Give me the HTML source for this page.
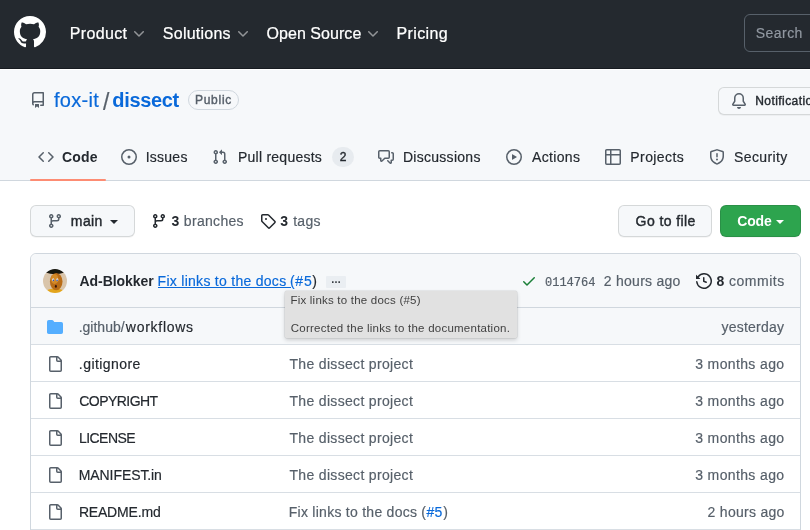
<!DOCTYPE html>
<html lang="en">
<head>
<meta charset="utf-8">
<title>fox-it/dissect</title>
<style>

*{box-sizing:border-box;margin:0;padding:0}
html,body{width:810px;height:530px;overflow:hidden;background:#fff}
body{font-family:"Liberation Sans",Arial,sans-serif;font-size:14px;color:#24292f;position:relative;-webkit-font-smoothing:antialiased}
a{color:inherit;text-decoration:none}
.abs{position:absolute;white-space:nowrap}
svg{display:block}
.t{position:absolute;white-space:nowrap;line-height:20px;height:20px}
/* header */
#hdr{position:absolute;left:0;top:0;width:810px;height:69px;background:#24292f;border-bottom:1px solid #171b21}
.nav{color:#fff;font-size:16px;top:24px;-webkit-text-stroke:.2px #fff}
.chev{position:absolute;top:25.2px}
#search{position:absolute;left:744px;top:14px;width:90px;height:38px;border:1px solid #57606a;border-radius:6px}
/* repo head */
#rh{position:absolute;left:0;top:70px;width:810px;height:111px;background:#f6f8fa;border-bottom:1px solid #d0d7de}
.tab{font-size:14px;top:147px;color:#24292f}
.ico{position:absolute}
.btn{position:absolute;border:1px solid rgba(27,31,36,.15);border-radius:6px;background:#f6f8fa;box-shadow:0 1px 0 rgba(27,31,36,.04)}
/* file box */
#box{position:absolute;left:30px;top:253px;width:771px;height:300px;border:1px solid #d0d7de;border-radius:6px;background:#fff}
#boxh{position:absolute;left:0;top:0;width:769px;height:54px;background:#f6f8fa;border-bottom:1px solid #d0d7de;border-radius:6px 6px 0 0}
.row{position:absolute;left:31px;width:769px;height:37px;border-top:1px solid #d8dee4}
.fn{left:79px;color:#24292f}
.msg{left:289px;color:#57606a}
.age{right:26px;color:#57606a;text-align:right}
.t,.abs{-webkit-text-stroke:.18px currentColor}
[style*="font-weight:bold"]{-webkit-text-stroke:0 currentColor}
.med.med{font-weight:normal;-webkit-text-stroke:.4px currentColor}
.nav.nav{-webkit-text-stroke:.22px #fff}
#tp1,#tp2{-webkit-text-stroke:0 currentColor}
/*TUNE*/
#n1{left:69.74px!important;right:auto!important;letter-spacing:0.341px}
#n2{left:162.84px!important;right:auto!important;letter-spacing:0.246px}
#n3{left:266.53px!important;right:auto!important;letter-spacing:0.050px}
#n4{left:396.53px!important;right:auto!important;letter-spacing:0.376px}
#srch{left:755.79px!important;right:auto!important;letter-spacing:0.448px}
#own{left:54.00px!important;right:auto!important;letter-spacing:0.301px}
#sl{left:102.97px!important;right:auto!important;letter-spacing:0.000px}
#rep{left:112.35px!important;right:auto!important;letter-spacing:-0.334px}
#t1{left:62.00px!important;right:auto!important;letter-spacing:0.182px}
#t2{left:145.64px!important;right:auto!important;letter-spacing:0.262px}
#t3{left:238.01px!important;right:auto!important;letter-spacing:0.241px}
#t4{left:402.92px!important;right:auto!important;letter-spacing:0.283px}
#t5{left:531.94px!important;right:auto!important;letter-spacing:0.351px}
#t6{left:630.29px!important;right:auto!important;letter-spacing:0.424px}
#t7{left:734.02px!important;right:auto!important;letter-spacing:0.396px}
#main{left:70.86px!important;right:auto!important;letter-spacing:0.394px}
#br3{left:171.62px!important;right:auto!important;letter-spacing:0.000px}
#brt{left:183.85px!important;right:auto!important;letter-spacing:0.306px}
#tg3{left:280.16px!important;right:auto!important;letter-spacing:0.000px}
#tgt{left:293.18px!important;right:auto!important;letter-spacing:0.311px}
#gtf{left:635.60px!important;right:auto!important;letter-spacing:0.419px}
#cb{left:737.30px!important;right:auto!important;letter-spacing:-0.179px}
#au{left:79.51px!important;right:auto!important;letter-spacing:-0.054px}
#cm{left:157.58px!important;right:auto!important;letter-spacing:0.281px}
#cmp{left:290.07px!important;right:auto!important;letter-spacing:0.000px}
#cm2{left:295.35px!important;right:auto!important;letter-spacing:0.914px}
#cm3{left:312.16px!important;right:auto!important;letter-spacing:0.000px}
#cago{left:603.84px!important;right:auto!important;letter-spacing:0.260px}
#cmt{left:728.99px!important;right:auto!important;letter-spacing:0.533px}
#f0a{left:78.68px!important;right:auto!important;letter-spacing:0.000px}
#f0b{left:125.83px!important;right:auto!important;letter-spacing:0.721px}
#a0{left:721.47px!important;right:auto!important;letter-spacing:0.220px}
#f1{left:78.85px!important;right:auto!important;letter-spacing:0.439px}
#f2{left:79.30px!important;right:auto!important;letter-spacing:-0.555px}
#f3{left:78.89px!important;right:auto!important;letter-spacing:-0.519px}
#f4{left:78.78px!important;right:auto!important;letter-spacing:-0.087px}
#f5{left:78.88px!important;right:auto!important;letter-spacing:-0.179px}
#m1{left:289.48px!important;right:auto!important;letter-spacing:0.326px}
#m2{left:289.48px!important;right:auto!important;letter-spacing:0.326px}
#m3{left:289.48px!important;right:auto!important;letter-spacing:0.326px}
#m4{left:289.48px!important;right:auto!important;letter-spacing:0.326px}
#a1{left:695.20px!important;right:auto!important;letter-spacing:0.370px}
#a2{left:695.20px!important;right:auto!important;letter-spacing:0.370px}
#a3{left:695.20px!important;right:auto!important;letter-spacing:0.370px}
#a4{left:695.20px!important;right:auto!important;letter-spacing:0.370px}
#tp1{left:290.47px!important;right:auto!important;letter-spacing:0.215px}
#tp2{left:290.81px!important;right:auto!important;letter-spacing:0.235px}
#pubt{left:196.95px!important;right:auto!important;letter-spacing:0.752px}
#m5{left:288.74px!important;right:auto!important;letter-spacing:0.265px}
#m5p{left:421.16px!important;right:auto!important;letter-spacing:0.000px}
#m5b{left:426.39px!important;right:auto!important;letter-spacing:0.385px}
#m5c{left:443.26px!important;right:auto!important;letter-spacing:0.000px}
#a5{left:707.61px!important;right:auto!important;letter-spacing:0.281px}
#c8{left:716.47px!important;right:auto!important;letter-spacing:0.000px}
/*ENDTUNE*/
</style>
</head>
<body>
<div id="pg" style="position:absolute;left:0;top:0;width:810px;height:530px;will-change:transform">
<div id="hdr">
  <svg class="ico" style="left:14px;top:16px" width="32" height="32" viewBox="0 0 16 16" fill="#fff"><path fill-rule="evenodd" d="M8 0C3.58 0 0 3.58 0 8c0 3.54 2.29 6.53 5.47 7.59.4.07.55-.17.55-.38 0-.19-.01-.82-.01-1.49-2.01.37-2.53-.49-2.69-.94-.09-.23-.48-.94-.82-1.13-.28-.15-.68-.52-.01-.53.63-.01 1.08.58 1.23.82.72 1.21 1.87.87 2.33.66.07-.52.28-.87.51-1.07-1.78-.2-3.64-.89-3.64-3.95 0-.87.31-1.59.82-2.15-.08-.2-.36-1.02.08-2.12 0 0 .67-.21 2.2.82.64-.18 1.32-.27 2-.27.68 0 1.36.09 2 .27 1.53-1.04 2.2-.82 2.2-.82.44 1.1.16 1.92.08 2.12.51.56.82 1.27.82 2.15 0 3.07-1.87 3.75-3.65 3.95.29.25.54.73.54 1.48 0 1.07-.01 1.93-.01 2.2 0 .21.15.46.55.38A8.013 8.013 0 0016 8c0-4.42-3.58-8-8-8z"/></svg>
  <span class="t nav" id="n1" style="left:70px">Product</span>
  <svg class="chev" style="left:131px" width="16" height="16" viewBox="0 0 16 16" fill="#fff" opacity=".5"><path d="M12.78 6.22a.75.75 0 010 1.06l-4.25 4.25a.75.75 0 01-1.06 0L3.22 7.28a.75.75 0 011.06-1.06L8 9.94l3.72-3.72a.75.75 0 011.06 0z"/></svg>
  <span class="t nav" id="n2" style="left:163px">Solutions</span>
  <svg class="chev" style="left:235px" width="16" height="16" viewBox="0 0 16 16" fill="#fff" opacity=".5"><path d="M12.78 6.22a.75.75 0 010 1.06l-4.25 4.25a.75.75 0 01-1.06 0L3.22 7.28a.75.75 0 011.06-1.06L8 9.94l3.72-3.72a.75.75 0 011.06 0z"/></svg>
  <span class="t nav" id="n3" style="left:267px">Open Source</span>
  <svg class="chev" style="left:365px" width="16" height="16" viewBox="0 0 16 16" fill="#fff" opacity=".5"><path d="M12.78 6.22a.75.75 0 010 1.06l-4.25 4.25a.75.75 0 01-1.06 0L3.22 7.28a.75.75 0 011.06-1.06L8 9.94l3.72-3.72a.75.75 0 011.06 0z"/></svg>
  <span class="t nav" id="n4" style="left:397px">Pricing</span>
  <div id="search"></div>
  <span class="t" id="srch" style="left:757px;top:23px;font-size:14px;color:#9198a1">Search</span>
</div>

<div id="rh"></div>
<svg class="ico" style="left:30px;top:92px" width="16" height="16" viewBox="0 0 16 16" fill="#57606a"><path fill-rule="evenodd" d="M2 2.5A2.5 2.5 0 014.5 0h8.75a.75.75 0 01.75.75v12.5a.75.75 0 01-.75.75h-2.5a.75.75 0 110-1.5h1.75v-2h-8a1 1 0 00-.714 1.7.75.75 0 01-1.072 1.05A2.495 2.495 0 012 11.5v-9zm10.5-1V9h-8c-.356 0-.694.074-1 .208V2.5a1 1 0 011-1h8zM5 12.25v3.25a.25.25 0 00.4.2l1.45-1.087a.25.25 0 01.3 0L8.6 15.7a.25.25 0 00.4-.2v-3.25a.25.25 0 00-.25-.25h-3.5a.25.25 0 00-.25.25z"/></svg>
<span class="t" id="own" style="left:54px;top:88px;font-size:20px;line-height:24px;height:24px;color:#0969da">fox-it</span>
<span class="t" id="sl" style="left:103px;top:90px;font-size:23px;line-height:24px;height:24px;color:#57606a">/</span>
<span class="t" id="rep" style="left:113px;top:88px;font-size:20px;line-height:24px;height:24px;color:#0969da;font-weight:bold">dissect</span>
<span class="abs med" id="pub" style="left:188px;top:90px;width:51px;height:20px;border:1px solid #d0d7de;border-radius:10px;font-size:12px;line-height:18px;color:#57606a;text-align:center"><span id="pubt">Public</span></span>
<div class="btn" style="left:718px;top:87px;width:110px;height:28px"></div>
<svg class="ico" style="left:731px;top:93px" width="16" height="16" viewBox="0 0 16 16" fill="#57606a"><path d="M8 16a2 2 0 001.985-1.75c.017-.137-.097-.25-.235-.25h-3.5c-.138 0-.252.113-.235.25A2 2 0 008 16z"/><path fill-rule="evenodd" d="M8 1.5A3.5 3.5 0 004.5 5v2.947c0 .346-.102.683-.294.97l-1.703 2.556a.018.018 0 00-.003.01l.001.006c0 .002.002.004.004.006a.017.017 0 00.006.004l.007.001h10.964l.007-.001a.016.016 0 00.006-.004.016.016 0 00.004-.006l.001-.007a.017.017 0 00-.003-.01l-1.703-2.554a1.75 1.75 0 01-.294-.97V5A3.5 3.5 0 008 1.5zM3 5a5 5 0 0110 0v2.947c0 .05.015.098.042.139l1.703 2.555A1.518 1.518 0 0113.482 13H2.518a1.518 1.518 0 01-1.263-2.36l1.703-2.554A.25.25 0 003 7.947V5z"/></svg>
<span class="t med" id="notif" style="left:755.2px;top:91px;font-size:12px;color:#24292f;letter-spacing:.44px">Notifications</span>

<!-- tabs -->
<svg class="ico" style="left:38px;top:149px" width="16" height="16" viewBox="0 0 16 16" fill="#57606a"><path fill-rule="evenodd" d="M4.72 3.22a.75.75 0 011.06 1.06L2.06 8l3.72 3.72a.75.75 0 11-1.06 1.06L.47 8.53a.75.75 0 010-1.06l4.25-4.25zm6.56 0a.75.75 0 10-1.06 1.06L13.94 8l-3.72 3.72a.75.75 0 101.06 1.06l4.25-4.25a.75.75 0 000-1.06l-4.25-4.25z"/></svg>
<span class="t tab" id="t1" style="left:62px;font-weight:bold">Code</span>
<div class="abs" style="left:30px;top:179px;width:76px;height:2px;background:#fd8c73;border-radius:6px;z-index:2"></div>
<svg class="ico" style="left:121px;top:149px" width="16" height="16" viewBox="0 0 16 16" fill="#57606a"><path d="M8 9.5a1.5 1.5 0 100-3 1.5 1.5 0 000 3z"/><path fill-rule="evenodd" d="M8 0a8 8 0 100 16A8 8 0 008 0zM1.5 8a6.5 6.5 0 1113 0 6.5 6.5 0 01-13 0z"/></svg>
<span class="t tab" id="t2" style="left:146px">Issues</span>
<svg class="ico" style="left:212px;top:149px" width="16" height="16" viewBox="0 0 16 16" fill="#57606a"><path fill-rule="evenodd" d="M7.177 3.073L9.573.677A.25.25 0 0110 .854v4.792a.25.25 0 01-.427.177L7.177 3.427a.25.25 0 010-.354zM3.75 2.5a.75.75 0 100 1.5.75.75 0 000-1.5zm-2.25.75a2.25 2.25 0 113 2.122v5.256a2.251 2.251 0 11-1.5 0V5.372A2.25 2.25 0 011.5 3.25zM11 2.5h-1V4h1a1 1 0 011 1v5.628a2.251 2.251 0 101.5 0V5A2.5 2.5 0 0011 2.5zm1 10.25a.75.75 0 111.5 0 .75.75 0 01-1.5 0zM3.75 12a.75.75 0 100 1.5.75.75 0 000-1.5z"/></svg>
<span class="t tab" id="t3" style="left:238px">Pull requests</span>
<span class="abs med" id="cnt" style="left:332px;top:147px;width:22px;height:20px;border-radius:10px;background:rgba(175,184,193,.2);font-size:12px;line-height:20px;text-align:center;color:#24292f">2</span>
<svg class="ico" style="left:378px;top:149px" width="16" height="16" viewBox="0 0 16 16" fill="#57606a"><path fill-rule="evenodd" d="M1.5 2.75a.25.25 0 01.25-.25h8.5a.25.25 0 01.25.25v5.5a.25.25 0 01-.25.25h-3.5a.75.75 0 00-.53.22L3.5 11.44V9.25a.75.75 0 00-.75-.75h-1a.25.25 0 01-.25-.25v-5.5zM1.75 1A1.75 1.75 0 000 2.75v5.5C0 9.216.784 10 1.75 10H2v1.543a1.457 1.457 0 002.487 1.03L7.061 10h3.189A1.75 1.75 0 0012 8.25v-5.5A1.75 1.75 0 0010.25 1h-8.5zM14.5 4.75a.25.25 0 00-.25-.25h-.5a.75.75 0 110-1.5h.5c.966 0 1.75.784 1.75 1.75v5.5A1.75 1.75 0 0114.25 12H14v1.543a1.457 1.457 0 01-2.487 1.03L9.22 12.28a.75.75 0 111.06-1.06l2.22 2.22v-2.19a.75.75 0 01.75-.75h1a.25.25 0 00.25-.25v-5.5z"/></svg>
<span class="t tab" id="t4" style="left:403px">Discussions</span>
<svg class="ico" style="left:506px;top:149px" width="16" height="16" viewBox="0 0 16 16" fill="#57606a"><path fill-rule="evenodd" d="M1.5 8a6.5 6.5 0 1113 0 6.5 6.5 0 01-13 0zM8 0a8 8 0 100 16A8 8 0 008 0zM6.379 5.227A.25.25 0 006 5.442v5.117a.25.25 0 00.379.214l4.264-2.559a.25.25 0 000-.428L6.379 5.227z"/></svg>
<span class="t tab" id="t5" style="left:531px">Actions</span>
<svg class="ico" style="left:605px;top:149px" width="16" height="16" viewBox="0 0 16 16" fill="#57606a"><path fill-rule="evenodd" d="M0 1.75C0 .784.784 0 1.75 0h12.5C15.216 0 16 .784 16 1.75v12.5A1.75 1.75 0 0114.25 16H1.75A1.75 1.75 0 010 14.25V1.75zM1.5 6.5v7.75c0 .138.112.25.25.25H5v-8H1.5zM5 5H1.5V1.75a.25.25 0 01.25-.25H5V5zm1.5 1.5v8h7.75a.25.25 0 00.25-.25V6.5h-8zm8-1.5h-8V1.5h7.75a.25.25 0 01.25.25V5z"/></svg>
<span class="t tab" id="t6" style="left:630px">Projects</span>
<svg class="ico" style="left:709px;top:149px" width="16" height="16" viewBox="0 0 16 16" fill="#57606a"><path fill-rule="evenodd" d="M8.533.133a1.75 1.75 0 00-1.066 0l-5.25 1.68A1.75 1.75 0 001 3.48V7c0 1.566.32 3.182 1.303 4.682.983 1.498 2.585 2.813 5.032 3.855a1.7 1.7 0 001.33 0c2.447-1.042 4.049-2.357 5.032-3.855C14.68 10.182 15 8.566 15 7V3.48a1.75 1.75 0 00-1.217-1.667L8.533.133zm-.61 1.429a.25.25 0 01.153 0l5.25 1.68a.25.25 0 01.174.238V7c0 1.358-.275 2.666-1.057 3.86-.784 1.194-2.121 2.34-4.366 3.297a.2.2 0 01-.154 0c-2.245-.956-3.582-2.104-4.366-3.298C2.775 9.666 2.5 8.36 2.5 7V3.48a.25.25 0 01.174-.237l5.25-1.68zM9 10.5a1 1 0 11-2 0 1 1 0 012 0zm-.25-5.75a.75.75 0 10-1.5 0v3a.75.75 0 001.5 0v-3z"/></svg>
<span class="t tab" id="t7" style="left:734px">Security</span>

<!-- file nav -->
<div class="btn" style="left:30px;top:205px;width:105px;height:32px"></div>
<svg class="ico" style="left:47px;top:213px" width="16" height="16" viewBox="0 0 16 16" fill="#57606a"><path fill-rule="evenodd" d="M11.75 2.5a.75.75 0 100 1.5.75.75 0 000-1.5zm-2.25.75a2.25 2.25 0 113 2.122V6A2.5 2.5 0 0110 8.5H6a1 1 0 00-1 1v1.128a2.251 2.251 0 11-1.5 0V5.372a2.25 2.25 0 111.5 0v1.836A2.492 2.492 0 016 7h4a1 1 0 001-1v-.628A2.25 2.25 0 019.5 3.25zM4.25 12a.75.75 0 100 1.5.75.75 0 000-1.5zM3.5 3.25a.75.75 0 111.5 0 .75.75 0 01-1.5 0z"/></svg>
<span id="main" class="t med" style="left:71px;top:211px">main</span>
<div class="abs" style="left:110px;top:220px;width:0;height:0;border:4px solid transparent;border-top-color:#24292f;border-bottom:0"></div>
<svg class="ico" style="left:151px;top:213px" width="16" height="16" viewBox="0 0 16 16" fill="#24292f"><path fill-rule="evenodd" d="M11.75 2.5a.75.75 0 100 1.5.75.75 0 000-1.5zm-2.25.75a2.25 2.25 0 113 2.122V6A2.5 2.5 0 0110 8.5H6a1 1 0 00-1 1v1.128a2.251 2.251 0 11-1.5 0V5.372a2.25 2.25 0 111.5 0v1.836A2.492 2.492 0 016 7h4a1 1 0 001-1v-.628A2.25 2.25 0 019.5 3.25zM4.25 12a.75.75 0 100 1.5.75.75 0 000-1.5zM3.5 3.25a.75.75 0 111.5 0 .75.75 0 01-1.5 0z"/></svg>
<span class="t" id="br3" style="left:171px;top:211px;font-weight:bold">3</span><span class="t" id="brt" style="left:184px;top:211px;color:#57606a">branches</span>
<svg class="ico" style="left:260px;top:213px" width="16" height="16" viewBox="0 0 16 16" fill="#24292f"><path fill-rule="evenodd" d="M2.5 7.775V2.75a.25.25 0 01.25-.25h5.025a.25.25 0 01.177.073l6.25 6.25a.25.25 0 010 .354l-5.025 5.025a.25.25 0 01-.354 0l-6.25-6.25a.25.25 0 01-.073-.177zm-1.5 0V2.75C1 1.784 1.784 1 2.75 1h5.025c.464 0 .91.184 1.238.513l6.25 6.25a1.75 1.75 0 010 2.474l-5.026 5.026a1.75 1.75 0 01-2.474 0l-6.25-6.25A1.75 1.75 0 011 7.775zM6 5a1 1 0 100 2 1 1 0 000-2z"/></svg>
<span class="t" id="tg3" style="left:280px;top:211px;font-weight:bold">3</span><span class="t" id="tgt" style="left:293px;top:211px;color:#57606a">tags</span>
<div class="btn" style="left:618px;top:205px;width:94px;height:32px"></div>
<span class="t med" id="gtf" style="left:636px;top:211px">Go to file</span>
<div class="btn" style="left:720px;top:205px;width:81px;height:32px;background:#2da44e;border-color:rgba(27,31,36,.15)"></div>
<span class="t" id="cb" style="left:737px;top:211px;font-weight:bold;color:#fff">Code</span>
<div class="abs" style="left:776px;top:220px;width:0;height:0;border:4px solid transparent;border-top-color:#fff;border-bottom:0"></div>

<!-- file box -->
<div id="box"><div id="boxh"></div></div>
<svg class="ico" style="left:43px;top:269px" width="24" height="24" viewBox="0 0 24 24"><defs><clipPath id="av"><circle cx="12" cy="12" r="12"/></clipPath><filter id="bl" x="-10%" y="-10%" width="120%" height="120%"><feGaussianBlur stdDeviation=".45"/></filter></defs><g clip-path="url(#av)"><g filter="url(#bl)"><rect x="-2" y="-2" width="28" height="28" fill="#d9c5ab"/><ellipse cx="12" cy=".3" rx="12" ry="5" fill="#17120b"/><ellipse cx="12" cy="23" rx="9" ry="3.4" fill="#e3a51f"/><ellipse cx="13.2" cy="12.6" rx="6.3" ry="8.6" fill="#b96c19"/><ellipse cx="11.6" cy="10" rx="3.6" ry="5" fill="#d48a27"/><ellipse cx="10.2" cy="10.8" rx="1.1" ry="1.5" fill="#f1ede6"/><ellipse cx="14.3" cy="10.8" rx="1.1" ry="1.5" fill="#f1ede6"/><circle cx="10.4" cy="11.4" r=".8" fill="#3c55a8"/><circle cx="14.1" cy="11.4" r=".8" fill="#3c55a8"/><ellipse cx="12.9" cy="17.2" rx="1" ry="1.5" fill="#3a1906"/></g></g></svg>
<span class="t" id="au" style="left:79px;top:271px;font-weight:bold">Ad-Blokker</span>
<span class="t" id="cm" style="left:158px;top:271px;color:#0969da">Fix links to the docs</span>
<div class="abs" style="left:158px;top:287px;width:132.5px;height:1px;background:#0969da"></div>
<span class="t" id="cmp" style="left:291px;top:271px;color:#0969da">(</span>
<span class="t" id="cm2" style="left:294px;top:271px;color:#0969da">#5</span>
<span class="t" id="cm3" style="left:312px;top:271px;color:#24292f">)</span>
<span class="abs" id="ell" style="left:326px;top:276px;width:20px;height:12px;background:#eaeef2;border-radius:1px;font-size:10px;line-height:8.6px;text-align:center;font-weight:bold;color:#24292f">…</span>
<svg class="ico" style="left:521px;top:273px" width="16" height="16" viewBox="0 0 16 16" fill="#1a7f37"><path fill-rule="evenodd" d="M13.78 4.22a.75.75 0 010 1.06l-7.25 7.25a.75.75 0 01-1.06 0L2.22 9.28a.75.75 0 011.06-1.06L6 10.94l6.72-6.72a.75.75 0 011.06 0z"/></svg>
<span class="t" id="sha" style="left:545px;top:272.5px;-webkit-text-stroke:.2px currentColor;font-family:'Liberation Mono',monospace;font-size:12px;color:#57606a">0114764</span>
<span class="t" id="cago" style="left:604px;top:271px;color:#57606a">2 hours ago</span>
<svg class="ico" style="left:696px;top:273px" width="16" height="16" viewBox="0 0 16 16" fill="#24292f"><path fill-rule="evenodd" d="M1.643 3.143L.427 1.927A.25.25 0 000 2.104V5.75c0 .138.112.25.25.25h3.646a.25.25 0 00.177-.427L2.715 4.215a6.5 6.5 0 11-1.18 4.458.75.75 0 10-1.493.154 8.001 8.001 0 101.6-5.684zM7.750 4a.75.75 0 01.75.75v2.992l2.028.812a.75.75 0 01-.557 1.392l-2.5-1A.75.75 0 017 8.25v-3.5A.75.75 0 017.75 4z"/></svg>
<span class="t" id="c8" style="left:716px;top:271px;font-weight:bold">8</span><span class="t" id="cmt" style="left:729px;top:271px;color:#57606a">commits</span>

<!-- rows -->
<div class="row" style="top:308px;border-top:0;height:36px;background:#f6f8fa"></div>
<div class="row" style="top:344px"></div>
<div class="row" style="top:381px"></div>
<div class="row" style="top:418px"></div>
<div class="row" style="top:455px"></div>
<div class="row" style="top:492px"></div>
<div class="row" style="top:529px;height:1px"></div>

<svg class="ico" style="left:47px;top:319px" width="16" height="16" viewBox="0 0 16 16" fill="#54aeff"><path d="M1.75 1A1.75 1.75 0 000 2.750v10.5C0 14.216.784 15 1.75 15h12.5A1.75 1.750 0 0016 13.25v-8.5A1.75 1.75 0 0014.25 3H7.5a.25.25 0 01-.2-.1l-.9-1.2C6.07 1.26 5.55 1 5 1H1.750z"/></svg>
<span class="t fn" id="f0a" style="top:317px;color:#57606a">.github/</span><span class="t" id="f0b" style="left:125px;top:317px">workflows</span>
<span class="t age" id="a0" style="top:317px">yesterday</span>
<svg class="ico" style="left:47px;top:356px" width="16" height="16" viewBox="0 0 16 16" fill="#57606a"><path d="M2 1.75C2 .784 2.784 0 3.75 0h6.586c.464 0 .909.184 1.237.513l2.914 2.914c.329.328.513.773.513 1.237v9.586A1.75 1.75 0 0 1 13.25 16h-9.5A1.75 1.75 0 0 1 2 14.250zm1.750-.25a.25.25 0 0 0-.25.25v12.5c0 .138.112.25.25.25h9.5a.25.25 0 0 0 .25-.25V6h-2.750A1.75 1.75 0 0 1 9 4.250V1.5zm6.750.062V4.25c0 .138.112.25.25.25h2.688l-.011-.013-2.914-2.914-.013-.011z"/></svg>
<span class="t fn" id="f1" style="top:354px">.gitignore</span>
<span class="t msg" id="m1" style="top:354px">The dissect project</span>
<span class="t age" id="a1" style="top:354px">3 months ago</span>
<svg class="ico" style="left:47px;top:393px" width="16" height="16" viewBox="0 0 16 16" fill="#57606a"><path d="M2 1.75C2 .784 2.784 0 3.75 0h6.586c.464 0 .909.184 1.237.513l2.914 2.914c.329.328.513.773.513 1.237v9.586A1.75 1.75 0 0 1 13.25 16h-9.5A1.75 1.75 0 0 1 2 14.250zm1.750-.25a.25.25 0 0 0-.25.25v12.5c0 .138.112.25.25.25h9.5a.25.25 0 0 0 .25-.25V6h-2.750A1.75 1.75 0 0 1 9 4.250V1.5zm6.750.062V4.25c0 .138.112.25.25.25h2.688l-.011-.013-2.914-2.914-.013-.011z"/></svg>
<span class="t fn" id="f2" style="top:391px">COPYRIGHT</span>
<span class="t msg" id="m2" style="top:391px">The dissect project</span>
<span class="t age" id="a2" style="top:391px">3 months ago</span>
<svg class="ico" style="left:47px;top:430px" width="16" height="16" viewBox="0 0 16 16" fill="#57606a"><path d="M2 1.75C2 .784 2.784 0 3.75 0h6.586c.464 0 .909.184 1.237.513l2.914 2.914c.329.328.513.773.513 1.237v9.586A1.75 1.75 0 0 1 13.25 16h-9.5A1.75 1.75 0 0 1 2 14.250zm1.750-.25a.25.25 0 0 0-.25.25v12.5c0 .138.112.25.25.25h9.5a.25.25 0 0 0 .25-.25V6h-2.750A1.75 1.75 0 0 1 9 4.250V1.5zm6.750.062V4.25c0 .138.112.25.25.25h2.688l-.011-.013-2.914-2.914-.013-.011z"/></svg>
<span class="t fn" id="f3" style="top:428px">LICENSE</span>
<span class="t msg" id="m3" style="top:428px">The dissect project</span>
<span class="t age" id="a3" style="top:428px">3 months ago</span>
<svg class="ico" style="left:47px;top:467px" width="16" height="16" viewBox="0 0 16 16" fill="#57606a"><path d="M2 1.75C2 .784 2.784 0 3.75 0h6.586c.464 0 .909.184 1.237.513l2.914 2.914c.329.328.513.773.513 1.237v9.586A1.75 1.75 0 0 1 13.25 16h-9.5A1.75 1.75 0 0 1 2 14.250zm1.750-.25a.25.25 0 0 0-.25.25v12.5c0 .138.112.25.25.25h9.5a.25.25 0 0 0 .25-.25V6h-2.750A1.75 1.75 0 0 1 9 4.250V1.5zm6.750.062V4.25c0 .138.112.25.25.25h2.688l-.011-.013-2.914-2.914-.013-.011z"/></svg>
<span class="t fn" id="f4" style="top:465px">MANIFEST.in</span>
<span class="t msg" id="m4" style="top:465px">The dissect project</span>
<span class="t age" id="a4" style="top:465px">3 months ago</span>
<svg class="ico" style="left:47px;top:504px" width="16" height="16" viewBox="0 0 16 16" fill="#57606a"><path d="M2 1.75C2 .784 2.784 0 3.75 0h6.586c.464 0 .909.184 1.237.513l2.914 2.914c.329.328.513.773.513 1.237v9.586A1.75 1.75 0 0 1 13.25 16h-9.5A1.75 1.75 0 0 1 2 14.250zm1.750-.25a.25.25 0 0 0-.25.25v12.5c0 .138.112.25.25.25h9.5a.25.25 0 0 0 .25-.25V6h-2.750A1.75 1.75 0 0 1 9 4.250V1.5zm6.750.062V4.25c0 .138.112.25.25.25h2.688l-.011-.013-2.914-2.914-.013-.011z"/></svg>
<span class="t fn" id="f5" style="top:502px">README.md</span>
<span class="t msg" id="m5" style="top:502px">Fix links to the docs</span><span class="t" id="m5p" style="left:422px;top:502px;color:#57606a">(</span><span class="t" id="m5b" style="left:427px;top:502px;color:#0969da">#5</span><span class="t" id="m5c" style="left:444px;top:502px;color:#57606a">)</span>
<span class="t age" id="a5" style="top:502px">2 hours ago</span>

<!-- tooltip -->
<div class="abs" id="tip" style="left:285px;top:290.6px;width:232.3px;height:47px;background:#e1e1e1;border-radius:1.5px;box-shadow:0 0 0 .5px rgba(0,0,0,.1),0 2px 4px rgba(0,0,0,.18);font-size:11px;color:#24292f"></div>
<span class="t" id="tp1" style="left:291px;top:290px;font-size:11.5px;color:#3f3f3f">Fix links to the docs (#5)</span>
<span class="t" id="tp2" style="left:291px;top:318px;font-size:11.5px;color:#3f3f3f">Corrected the links to the documentation.</span>
</div>
</body>
</html>
